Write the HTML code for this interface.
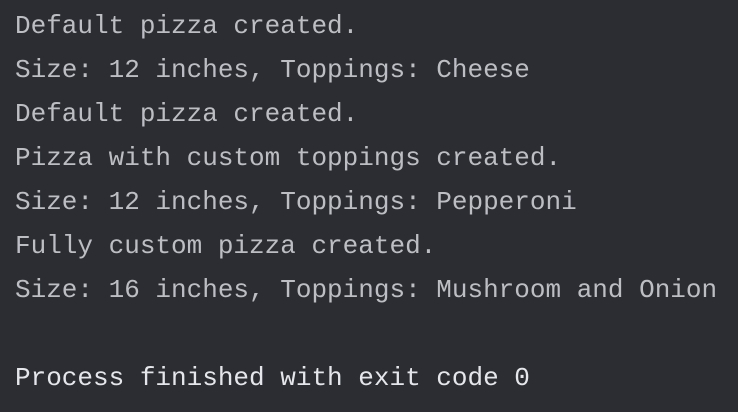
<!DOCTYPE html>
<html><head><style>
html,body{margin:0;padding:0;background:#2b2d33;width:738px;height:412px;overflow:hidden}
pre{margin:0;padding:4px 0 0 15px;font-family:"Liberation Mono","DejaVu Sans Mono",monospace;font-size:26px;line-height:44px;color:#bcbec4}
.b{color:#e4e6ec}
</style></head><body><pre>Default pizza created.
Size: 12 inches, Toppings: Cheese
Default pizza created.
Pizza with custom toppings created.
Size: 12 inches, Toppings: Pepperoni
Fully custom pizza created.
Size: 16 inches, Toppings: Mushroom and Onion

<span class="b">Process finished with exit code 0</span></pre></body></html>
